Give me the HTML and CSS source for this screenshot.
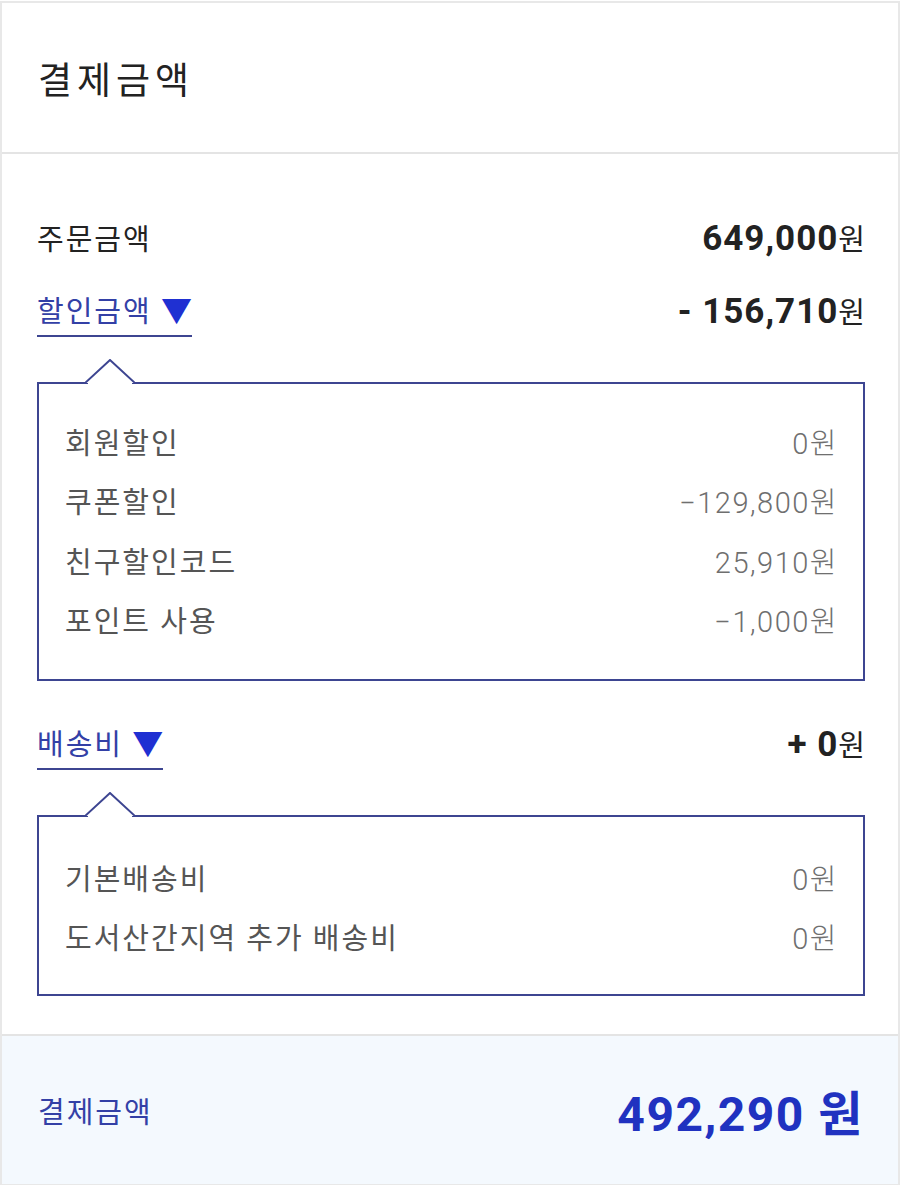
FILE: index.html
```html
<!DOCTYPE html>
<html lang="ko">
<head>
    <meta charset="UTF-8">
    <meta name="viewport" content="width=device-width, initial-scale=1.0">
    <title>결제금액</title>
    <link rel="stylesheet" href="styles.css">
</head>
<body>
    <div class="card">
        <div class="card-head">결제금액</div>

        <div class="summary">
            <div class="row">
                <span class="label">주문금액</span>
                <span class="amount"><b>649,000</b>원</span>
            </div>

            <div class="row toggle-row">
                <span class="toggle">할인금액 <i class="caret">▼</i></span>
                <span class="amount"><b>- 156,710</b>원</span>
            </div>
            <div class="detail discount">
                <svg class="notch" width="50" height="28" viewBox="0 0 50 28">
                    <rect x="3" y="21" width="44" height="7" fill="#fff"/>
                    <polyline points="0,24 25,1 50,24" fill="#fff" stroke="#3d4591" stroke-width="2"/>
                </svg>
                <div class="detail-row"><span>회원할인</span><span class="sub">0원</span></div>
                <div class="detail-row"><span>쿠폰할인</span><span class="sub">−129,800원</span></div>
                <div class="detail-row"><span>친구할인코드</span><span class="sub">25,910원</span></div>
                <div class="detail-row"><span>포인트 사용</span><span class="sub">−1,000원</span></div>
            </div>

            <div class="row toggle-row">
                <span class="toggle">배송비 <i class="caret">▼</i></span>
                <span class="amount"><b>+ 0</b>원</span>
            </div>
            <div class="detail shipping">
                <svg class="notch" width="50" height="28" viewBox="0 0 50 28">
                    <rect x="3" y="21" width="44" height="7" fill="#fff"/>
                    <polyline points="0,24 25,1 50,24" fill="#fff" stroke="#3d4591" stroke-width="2"/>
                </svg>
                <div class="detail-row"><span>기본배송비</span><span class="sub">0원</span></div>
                <div class="detail-row"><span>도서산간지역 추가 배송비</span><span class="sub">0원</span></div>
            </div>
        </div>

        <div class="total">
            <span class="total-label">결제금액</span>
            <span class="total-amount">492,290 원</span>
        </div>
    </div>
</body>
</html>
```

FILE: styles.css
```css
body {
    margin: 0;
    font-family: Roboto, "Noto Sans CJK KR", sans-serif;
    background-color: #fff;
    color: #222;
}
.card {
    box-sizing: border-box;
    width: 100%;
    margin-top: 1px;
    border: 2px solid #e8e8e8;
}
.card-head {
    height: 149px;
    display: flex;
    align-items: center;
    padding-left: 36px;
    font-size: 37px;
    letter-spacing: 5px;
    color: #222;
    border-bottom: 2px solid #e4e4e4;
}
.summary {
    padding: 53px 33px 38px 35px;
}
.row {
    display: flex;
    justify-content: space-between;
    align-items: center;
    height: 60px;
}
.label {
    font-size: 29px;
    letter-spacing: 2px;
    color: #222;
}
.amount {
    font-size: 29px;
    color: #222;
}
.amount b {
    font-size: 35px;
    font-weight: 700;
    letter-spacing: 1px;
    color: #222;
}
.toggle-row {
    align-items: flex-start;
    height: auto;
    margin-top: 25px;
    line-height: 40px;
}
.toggle-row + .detail + .toggle-row {
    margin-top: 44px;
}
.toggle {
    display: inline-block;
    font-size: 29px;
    letter-spacing: 2px;
    color: #3340a6;
    padding-bottom: 3px;
    border-bottom: 2px solid #3d4591;
}
.caret {
    font-style: normal;
    color: #1f30d2;
    font-size: 31px;
    letter-spacing: 0;
}
.detail {
    position: relative;
    margin-top: 45px;
    padding: 27px 25px 30px 26px;
    border: 2px solid #3d4591;
}
.shipping {
    padding-top: 30px;
    padding-bottom: 28px;
}
.notch {
    position: absolute;
    top: -25px;
    left: 46px;
}
.detail-row {
    display: flex;
    justify-content: space-between;
    align-items: center;
    height: 59.5px;
    font-size: 29px;
    letter-spacing: 2px;
    color: #555;
}
.sub {
    font-weight: 300;
    letter-spacing: 1.5px;
    color: #6f6f6f;
}
.total {
    display: flex;
    justify-content: space-between;
    align-items: center;
    height: 148px;
    padding: 0 34px 0 36px;
    background-color: #f4f9fe;
    border-top: 2px solid #e4e4e4;
}
.total-label {
    font-size: 29px;
    letter-spacing: 2px;
    color: #3340a6;
}
.total-amount {
    font-size: 48px;
    font-weight: 700;
    letter-spacing: 1.5px;
    color: #2032c0;
}
```
